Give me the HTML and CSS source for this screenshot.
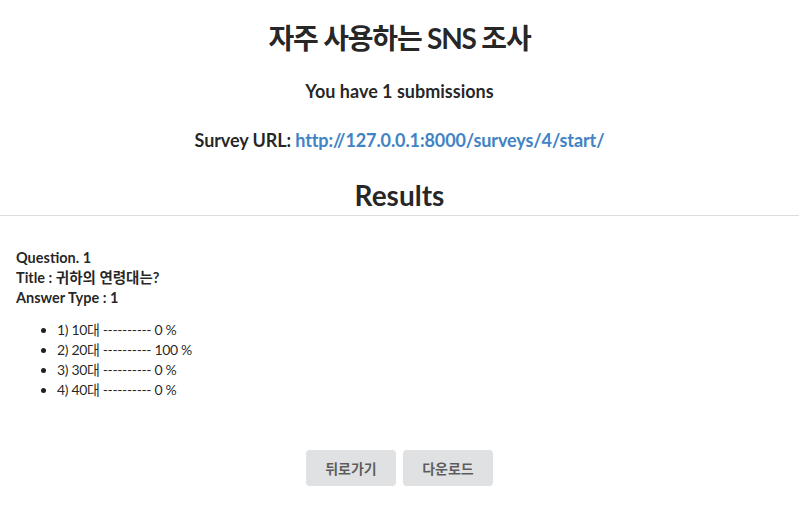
FILE: index.html
```html
<!DOCTYPE html>
<html lang="ko">
<head>
<meta charset="utf-8">
<link rel="stylesheet" href="styles.css">
</head>
<body>
<header class="head">
  <h1 class="title main-title">자주 사용하는 SNS 조사</h1>
  <h3 class="sub">You have 1 submissions</h3>
  <h3 class="sub url-line">Survey URL: <a class="link" href="#">http://127.0.0.1:8000/surveys/4/start/</a></h3>
  <h1 class="title results">Results</h1>
</header>
<hr class="rule">
<main class="content">
  <div class="question">
    <div>Question. 1</div>
    <div>Title : 귀하의 연령대는?</div>
    <div>Answer Type : 1</div>
  </div>
  <ul class="answers">
    <li>1) 10대 ---------- 0 %</li>
    <li>2) 20대 ---------- 100 %</li>
    <li>3) 30대 ---------- 0 %</li>
    <li>4) 40대 ---------- 0 %</li>
  </ul>
  <div class="actions">
    <button class="btn">뒤로가기</button>
    <button class="btn">다운로드</button>
  </div>
</main>
</body>
</html>
```
FILE: styles.css
```css
html, body {
  margin: 0;
  padding: 0;
  background: #fff;
}
body {
  font-family: Lato, "Noto Sans CJK KR", sans-serif;
  font-size: 14px;
  color: rgba(0,0,0,.87);
}
.head {
  text-align: center;
  padding-top: 20px;
}
.title {
  font-size: 28px;
  line-height: 36px;
  font-weight: 700;
  margin: 0;
}
.main-title {
  letter-spacing: -1.2px;
}
.sub {
  font-size: 18px;
  line-height: 23px;
  font-weight: 700;
  margin: 24px 0 0;
}
.url-line {
  margin-top: 26px;
  letter-spacing: -0.1px;
}
.link {
  color: #4183c4;
  text-decoration: none;
}
.results {
  margin-top: 25px;
}
.rule {
  margin: 2px 0 0;
  border: 0;
  border-top: 1px solid #ddd;
  height: 0;
}
.content {
  padding: 32px 16px 0;
}
.question {
  font-size: 14.5px;
  font-weight: 700;
  line-height: 20px;
}
.answers {
  margin: 12px 0 0;
  padding-left: 41px;
  line-height: 20px;
  letter-spacing: -0.35px;
}
.actions {
  display: flex;
  justify-content: center;
  gap: 7px;
  margin-top: 50px;
}
.btn {
  font-family: Lato, "Noto Sans CJK KR", sans-serif;
  font-size: 14px;
  font-weight: 700;
  height: 36px;
  width: 90px;
  border: 0;
  border-radius: 4px;
  background: #e0e1e2;
  color: rgba(0,0,0,.6);
  padding: 0;
}
```
